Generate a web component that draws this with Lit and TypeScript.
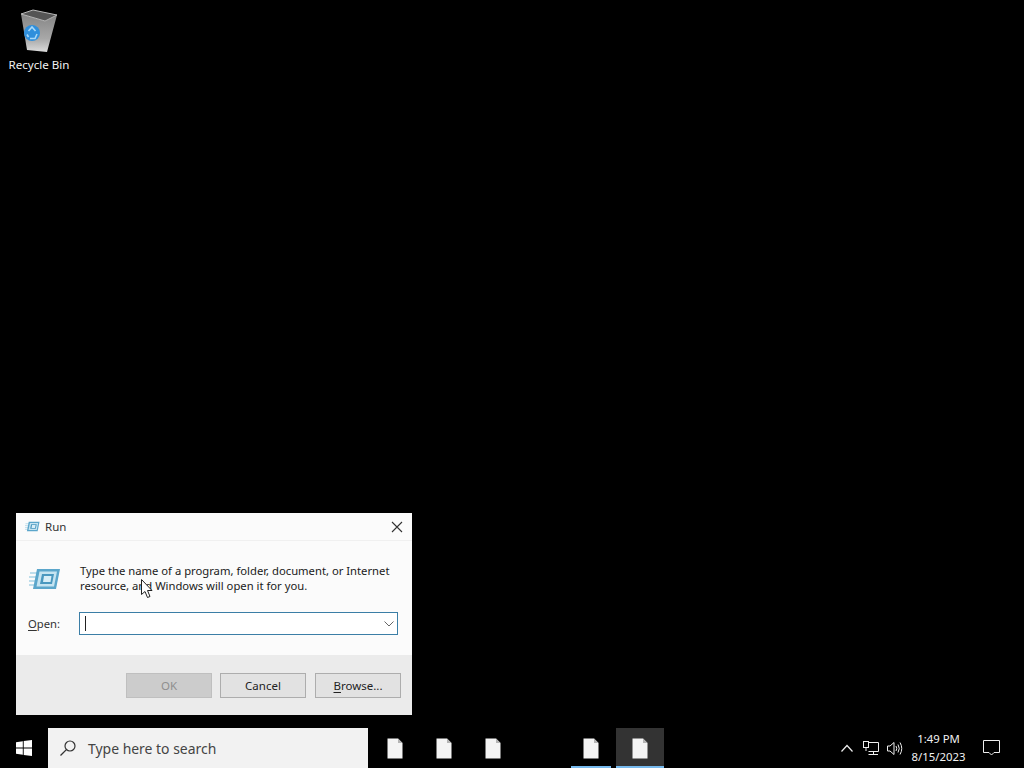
import { LitElement, html, css } from "lit";
import { customElement } from "lit/decorators.js";

const fileIcon = html`<svg width="16" height="21" viewBox="0 0 16 21">
  <path d="M0.5 0.5H11L15.5 5V20.5H0.5Z" fill="#f4f4f4" />
  <path d="M11 0.5V5H15.5Z" fill="#b4b4b4" />
</svg>`;

const runIcon = (w: number, h: number) => html`<svg width=${w} height=${h} viewBox="0 0 32 22">
  <path d="M1 5H9M0 9H7M0 13H6M0 17H5" stroke="#a9d3e6" stroke-width="1.5" fill="none" />
  <path d="M8 1H31L27 21H4Z" fill="#5ba6cb" />
  <path d="M10.5 3.5H28L25 18.5H7.5Z" fill="#c5e4f1" />
  <path d="M13 6H25L23 16H11Z" fill="#4a98bf" />
  <path d="M15 8H22.5L21.5 14H14Z" fill="#d8eef7" />
</svg>`;

@customElement("app-root")
export class AppRoot extends LitElement {
  static styles = css`
    :host {
      display: flex;
      flex-direction: column;
      height: 768px;
      width: 1024px;
      overflow: hidden;
      background: #000;
      font-family: "Noto Sans", "Open Sans", sans-serif;
      font-size: 11.25px;
      color: #1a1a1a;
    }
    .desktop {
      position: relative;
      flex: 1;
    }
    .recycle {
      position: absolute;
      left: 0;
      top: 9px;
      width: 78px;
      display: flex;
      flex-direction: column;
      align-items: center;
      gap: 4px;
      color: #f2f2f2;
      font-size: 11.6px;
    }
    .recycle span {
      line-height: 16px;
    }
    .dialog {
      position: absolute;
      left: 16px;
      top: 513px;
      width: 396px;
      height: 202px;
      background: #fbfbfb;
      display: flex;
      flex-direction: column;
    }
    .title {
      height: 27px;
      display: flex;
      align-items: center;
      padding: 0 9px 0 9px;
      gap: 5px;
      border-bottom: 1px solid #f0f0f0;
      color: #333;
      font-size: 11.5px;
    }
    .title span {
      flex: 1;
    }
    .body {
      flex: 1;
      padding: 22px 13px 0 12px;
    }
    .message {
      display: flex;
      align-items: flex-start;
      gap: 19px;
      line-height: 15px;
      white-space: nowrap;
    }
    .message svg {
      margin: 5px 0 0 1px;
      flex: none;
    }
    .message p {
      margin: 0;
    }
    .open {
      display: flex;
      align-items: center;
      margin-top: 19px;
      color: #333;
    }
    .open label {
      width: 51px;
    }
    u {
      text-underline-offset: 2px;
    }
    .combo {
      width: 319px;
      height: 23px;
      box-sizing: border-box;
      border: 1px solid #3b7ea6;
      background: #fff;
      display: flex;
      align-items: center;
      padding: 0 3px 0 5px;
      justify-content: space-between;
    }
    .caret {
      width: 1px;
      height: 15px;
      background: #222;
    }
    .footer {
      height: 60px;
      background: #ebebeb;
      display: flex;
      justify-content: flex-end;
      align-items: flex-start;
      gap: 8px;
      padding: 18px 11px 0 0;
      box-sizing: border-box;
    }
    .btn {
      width: 86px;
      height: 25px;
      box-sizing: border-box;
      background: #e2e2e2;
      border: 1px solid #adadad;
      display: flex;
      align-items: center;
      justify-content: center;
      color: #222;
      font-size: 11.5px;
    }
    .btn.cancel {
      margin-right: 1px;
    }
    .btn.disabled {
      background: #cccccc;
      border-color: #bfbfbf;
      color: #8f8f8f;
    }
    .pointer {
      position: absolute;
      left: 141px;
      top: 579px;
    }
    .taskbar {
      height: 40px;
      display: flex;
      align-items: stretch;
      background: #000;
    }
    .start {
      width: 48px;
      display: flex;
      align-items: center;
      justify-content: center;
    }
    .search {
      width: 320px;
      background: #f2f2f2;
      display: flex;
      align-items: center;
      gap: 12px;
      padding-left: 12px;
      box-sizing: border-box;
      font-size: 13.95px;
      color: #444;
    }
    .tasks {
      display: flex;
      margin-left: 2px;
    }
    .task {
      width: 49px;
      display: flex;
      align-items: center;
      justify-content: center;
      box-sizing: border-box;
      position: relative;
    }
    .task.open-app::after {
      content: "";
      position: absolute;
      left: 5px;
      right: 4px;
      bottom: 0;
      height: 2px;
      background: #76b9ed;
    }
    .task.active {
      background: #333;
      width: 48px;
      margin-left: 1px;
    }
    .task.active::after {
      left: 0;
      right: 0;
    }
    .tray {
      margin-left: auto;
      display: flex;
      align-items: center;
      color: #f2f2f2;
      padding-right: 24px;
    }
    .tray-icon {
      width: 24px;
      display: flex;
      justify-content: center;
    }
    .clock {
      width: 63px;
      text-align: center;
      line-height: 18px;
      font-size: 11.35px;
    }
    .notify {
      margin-left: 13px;
      display: flex;
    }
  `;

  render() {
    return html`
      <div class="desktop">
        <div class="recycle">
          <svg width="40" height="44" viewBox="0 0 40 44">
            <defs>
              <linearGradient id="bin" x1="0" x2="0" y1="0" y2="1">
                <stop offset="0" stop-color="#858585" />
                <stop offset="0.65" stop-color="#a8a8a8" />
                <stop offset="1" stop-color="#dcdcdc" />
              </linearGradient>
            </defs>
            <path d="M2 5L26 12L38 6L28 43L8 41Z" fill="url(#bin)" />
            <path d="M2 5L14 1L38 6L26 12Z" fill="#555" stroke="#b8b8b8" stroke-linejoin="round" />
            <circle cx="13" cy="24" r="8" fill="#2f8fdc" />
            <path d="M9.5 22L13 18L16.5 22M18 25L16 29.5H11M8 25.5L9.5 28" stroke="#a8d8f8" stroke-width="1.6" fill="none" />
          </svg>
          <span>Recycle Bin</span>
        </div>

        <div class="dialog">
          <div class="title">
            ${runIcon(15, 11)}
            <span>Run</span>
            <svg width="12" height="12" viewBox="0 0 12 12">
              <path d="M1 1L11 11M11 1L1 11" stroke="#333" stroke-width="1.1" />
            </svg>
          </div>
          <div class="body">
            <div class="message">
              ${runIcon(32, 22)}
              <p>Type the name of a program, folder, document, or Internet<br />resource, and Windows will open it for you.</p>
            </div>
            <div class="open">
              <label><u>O</u>pen:</label>
              <div class="combo">
                <div class="caret"></div>
                <svg width="10" height="6" viewBox="0 0 10 6">
                  <path d="M0.5 0.5L5 5L9.5 0.5" stroke="#666" fill="none" />
                </svg>
              </div>
            </div>
          </div>
          <div class="footer">
            <div class="btn disabled">OK</div>
            <div class="btn cancel">Cancel</div>
            <div class="btn"><span><u>B</u>rowse...</span></div>
          </div>
        </div>

        <svg class="pointer" width="12" height="20" viewBox="0 0 12 20">
          <path d="M0.5 0.5V15.5L4 12.5L6.5 18.5L9 17.5L6.5 11.5H11Z" fill="#fff" stroke="#222" />
        </svg>
      </div>

      <div class="taskbar">
        <div class="start">
          <svg width="16" height="16" viewBox="0 0 16 16">
            <path d="M0 2.2L6.8 1.2V7.5H0ZM7.7 1.1L16 0V7.5H7.7ZM0 8.4H6.8V14.8L0 13.8ZM7.7 8.4H16V16L7.7 14.9Z" fill="#fff" />
          </svg>
        </div>
        <div class="search">
          <svg width="16" height="16" viewBox="0 0 16 16">
            <circle cx="10" cy="6" r="5" fill="none" stroke="#333" stroke-width="1.2" />
            <path d="M6.4 9.6L0.5 15.5" stroke="#333" stroke-width="1.3" />
          </svg>
          <span>Type here to search</span>
        </div>
        <div class="tasks">
          <div class="task">${fileIcon}</div>
          <div class="task">${fileIcon}</div>
          <div class="task">${fileIcon}</div>
          <div class="task"></div>
          <div class="task open-app">${fileIcon}</div>
          <div class="task open-app active">${fileIcon}</div>
        </div>
        <div class="tray">
          <div class="tray-icon">
            <svg width="12" height="8" viewBox="0 0 12 8">
              <path d="M0.5 7.5L6 1.5L11.5 7.5" stroke="#eee" stroke-width="1.2" fill="none" />
            </svg>
          </div>
          <div class="tray-icon">
            <svg width="16" height="15" viewBox="0 0 16 15">
              <path d="M5.5 1.5H15.5V10.5H5.5M10.5 10.5V13.5M5.5 13.5H15" stroke="#eee" fill="none" />
              <rect x="0.5" y="0.5" width="5" height="6" fill="#000" stroke="#eee" />
              <path d="M3 6.5V10" stroke="#eee" />
            </svg>
          </div>
          <div class="tray-icon">
            <svg width="16" height="15" viewBox="0 0 16 15">
              <path d="M0.5 5H3L7 1.5V13.5L3 10H0.5Z" stroke="#eee" fill="none" />
              <path d="M9 5Q10.5 7.5 9 10M11 3.5Q13.5 7.5 11 11.5M13 1.5Q16.5 7.5 13 13.5" stroke="#eee" fill="none" />
            </svg>
          </div>
          <div class="clock">1:49 PM<br />8/15/2023</div>
          <div class="notify">
            <svg width="17" height="16" viewBox="0 0 17 16">
              <path d="M0.5 0.5H16.5V12.5H11L8.5 15L6 12.5H0.5Z" stroke="#eee" fill="none" />
            </svg>
          </div>
        </div>
      </div>
    `;
  }
}
